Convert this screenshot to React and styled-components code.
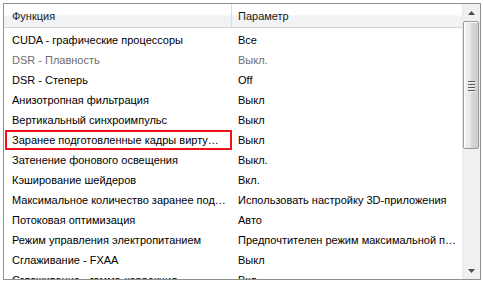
import React from "react";
import styled, { createGlobalStyle } from "styled-components";

const GlobalStyle = createGlobalStyle`
  html, body {
    margin: 0;
    padding: 0;
    background: #ffffff;
  }
  body {
    font-family: Tahoma, "Liberation Sans", Arial, sans-serif;
    font-size: 11px;
    color: #000000;
  }
`;

const rows = [
  { name: "CUDA - графические процессоры", value: "Все" },
  { name: "DSR - Плавность", value: "Выкл.", disabled: true },
  { name: "DSR - Степерь", value: "Off" },
  { name: "Анизотропная фильтрация", value: "Выкл" },
  { name: "Вертикальный синхроимпульс", value: "Выкл" },
  { name: "Заранее подготовленные кадры вирту…", value: "Выкл", marked: true },
  { name: "Затенение фонового освещения", value: "Выкл." },
  { name: "Кэширование шейдеров", value: "Вкл." },
  { name: "Максимальное количество заранее под…", value: "Использовать настройку 3D-приложения" },
  { name: "Потоковая оптимизация", value: "Авто" },
  { name: "Режим управления электропитанием", value: "Предпочтителен режим максимальной п…" },
  { name: "Сглаживание - FXAA", value: "Выкл" },
  { name: "Сглаживание - гамма-коррекция", value: "Вкл" },
];

const App = () => {
  return (
    <>
      <GlobalStyle />
      <Page>
        <Frame>
          <ListArea>
            <HeaderRow>
              <HeaderCell>Функция</HeaderCell>
              <HeaderCell last>Параметр</HeaderCell>
            </HeaderRow>
            <Rows>
              {rows.map((row) => (
                <Row key={row.name} disabled={row.disabled}>
                  <NameCell marked={row.marked}>{row.name}</NameCell>
                  <ValueCell>{row.value}</ValueCell>
                </Row>
              ))}
            </Rows>
          </ListArea>
          <ScrollBar>
            <ArrowButton>
              <svg width="7" height="4" viewBox="0 0 7 4">
                <path d="M0 4 L3.5 0 L7 4 Z" fill="#4d4d4d" />
              </svg>
            </ArrowButton>
            <Track>
              <Thumb>
                <Grip>
                  <span />
                  <span />
                  <span />
                  <span />
                </Grip>
              </Thumb>
            </Track>
            <ArrowButton>
              <svg width="7" height="4" viewBox="0 0 7 4">
                <path d="M0 0 L7 0 L3.5 4 Z" fill="#4d4d4d" />
              </svg>
            </ArrowButton>
          </ScrollBar>
        </Frame>
      </Page>
    </>
  );
};

export default App;

const Page = styled.div`
  width: 483px;
  height: 282px;
  padding: 3px 3px 2px 3px;
  box-sizing: border-box;
`;

const Frame = styled.div`
  width: 478px;
  height: 277px;
  box-sizing: border-box;
  border: 1px solid #8e8f8f;
  display: flex;
  overflow: hidden;
  background: #ffffff;
`;

const ListArea = styled.div`
  flex: 1;
  overflow: hidden;
`;

const HeaderRow = styled.div`
  display: grid;
  grid-template-columns: 228px 1fr;
  height: 24px;
  box-sizing: border-box;
  border-bottom: 1px solid #d5d5d5;
  background: linear-gradient(#ffffff 0%, #ffffff 45%, #f1f2f4 55%, #f1f2f4 100%);
`;

const HeaderCell = styled.div`
  display: flex;
  align-items: center;
  padding-left: ${(p) => (p.last ? "6px" : "8px")};
  border-right: ${(p) => (p.last ? "none" : "1px solid #dadde2")};
  color: #1a1a1a;
  white-space: nowrap;
`;

const Rows = styled.div`
  padding-top: 2px;
`;

const Row = styled.div`
  display: grid;
  grid-template-columns: 228px 1fr;
  height: 20px;
  color: ${(p) => (p.disabled ? "#6d6d6d" : "#000000")};
`;

const NameCell = styled.div`
  display: flex;
  align-items: center;
  padding-left: 8px;
  white-space: nowrap;
  overflow: hidden;
  box-sizing: border-box;
  ${(p) =>
    p.marked &&
    `
    margin-left: 1px;
    padding-left: 7px;
    box-shadow: inset 0 0 0 2px #ee1118;
  `}
`;

const ValueCell = styled.div`
  display: flex;
  align-items: center;
  padding-left: 6px;
  white-space: nowrap;
  overflow: hidden;
`;

const ScrollBar = styled.div`
  width: 17px;
  display: flex;
  flex-direction: column;
  background: #f0f0f0;
  border-left: 1px solid #e9e9e9;
`;

const ArrowButton = styled.div`
  height: 17px;
  display: flex;
  align-items: center;
  justify-content: center;
`;

const Track = styled.div`
  flex: 1;
  display: flex;
  flex-direction: column;
`;

const Thumb = styled.div`
  height: 128px;
  margin: 0 1px 0 0;
  box-sizing: border-box;
  border: 1px solid #9b9b9b;
  border-radius: 2px;
  background: linear-gradient(to right, #f2f2f2 0%, #e8e8e8 45%, #d6d6d6 55%, #cfcfcf 100%);
  box-shadow: inset 1px 1px 0 #ffffff;
  display: flex;
  align-items: center;
  justify-content: center;
`;

const Grip = styled.div`
  display: flex;
  flex-direction: column;
  gap: 1px;
  margin-top: 2px;
  span {
    display: block;
    width: 7px;
    height: 1px;
    background: #5b5b5b;
    border-bottom: 1px solid #f4f4f4;
  }
`;
